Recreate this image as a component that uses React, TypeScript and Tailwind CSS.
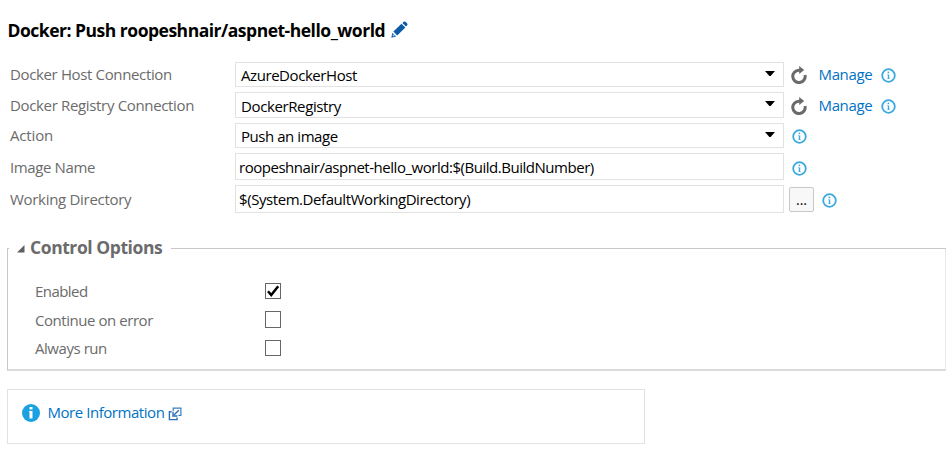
import type { ReactNode } from "react";

function InfoIcon({ className = "" }: { className?: string }) {
  return (
    <svg className={`block shrink-0 ${className}`} width="15" height="15" viewBox="0 0 15 15">
      <circle cx="7.5" cy="7.5" r="6.3" fill="none" stroke="#39a9e0" strokeWidth="1.8" />
      <rect x="6.6" y="3.6" width="1.6" height="1.6" fill="#39a9e0" />
      <path d="M6 6.4H8.2V10.4H8.8V11H6.2V10.4H6.8V7H6Z" fill="#39a9e0" />
    </svg>
  );
}

function RefreshIcon() {
  return (
    <svg className="block shrink-0" width="16" height="18" viewBox="0 0 16 18">
      <path d="M9.4 4.2H7.9A6.2 6.2 0 1 0 14 9" fill="none" stroke="#6a6a6a" strokeWidth="3" />
      <path d="M8.2 0L13.2 4L8.2 8Z" fill="#6a6a6a" />
    </svg>
  );
}

function PencilIcon() {
  return (
    <svg className="block shrink-0" width="17" height="17" viewBox="0 0 17 17">
      <path d="M11.4 2L12.7 0.8Q13.6 0 14.5 0.8L16.2 2.5Q17 3.4 16.2 4.2L15 5.5Z" fill="#0a5aa8" />
      <path d="M10.5 2.7L14.3 6.5L6.2 14.4L2.4 10.6Z" fill="#0a5aa8" />
      <path d="M1.4 11.7L5.1 15.4L0.3 16.7Z" fill="#0a5aa8" />
      <path d="M2.1 12.9L4 14.8L2.2 15.4L1.5 14.7Z" fill="#a9c8e4" />
    </svg>
  );
}

function Row({ label, labelClass, className, children }: { label: string; labelClass: string; className: string; children: ReactNode }) {
  return (
    <div className={`flex items-center ${className}`}>
      <div className={`w-[225px] shrink-0 text-[#6b6b6b] ${labelClass}`}>{label}</div>
      {children}
    </div>
  );
}

function Select({ value, textClass }: { value: string; textClass: string }) {
  return (
    <div className="flex h-full w-[549px] shrink-0 items-center justify-between border border-[#e2e2e2] pr-2 pl-[5px] text-black">
      <span className={textClass}>{value}</span>
      <svg className="mb-[3px] block" width="10" height="5" viewBox="0 0 10 5">
        <path d="M0 0H10L5.6 5H4.4Z" fill="#000" />
      </svg>
    </div>
  );
}

function TextField({ value, textClass }: { value: string; textClass: string }) {
  return (
    <div className="flex h-full w-[549px] shrink-0 items-center border border-[#e2e2e2] pl-[3px] text-black">
      <span className={textClass}>{value}</span>
    </div>
  );
}

function ManageLinks({ linkClass = "", iconClass = "" }: { linkClass?: string; iconClass?: string }) {
  return (
    <div className="flex items-center pl-[7px]">
      <span className={iconClass}>
        <RefreshIcon />
      </span>
      <a className={`ml-[11.5px] w-[62.5px] tracking-[-0.36px] text-[#0072c6] ${linkClass}`}>Manage</a>
      <InfoIcon className="mt-[2px]" />
    </div>
  );
}

function Check({ label, labelClass, checked, className, boxClass = "h-4" }: { label: string; labelClass: string; checked?: boolean; className: string; boxClass?: string }) {
  return (
    <div className={`flex items-center ${className}`}>
      <span className={`w-[230px] shrink-0 text-[#6b6b6b] ${labelClass}`}>{label}</span>
      <span className={`flex w-4 items-center justify-center border border-[#666] ${boxClass}`}>
        {checked && (
          <svg className="block shrink-0" width="14" height="14" viewBox="0 0 14 14">
            <path d="M2 7.3L5.2 11L12.2 2.2" fill="none" stroke="#000" strokeWidth="2.5" />
          </svg>
        )}
      </span>
    </div>
  );
}

export default function App() {
  return (
    <div className="h-[459px] w-[946px] overflow-hidden bg-white pt-[20px] font-['Open_Sans','Noto_Sans',sans-serif] text-[15px] leading-[20px] whitespace-nowrap">
      <div className="flex h-[22px] items-center pl-[7.5px]">
        <h1 className="w-[383.5px] pb-[2px] text-[17.5px] font-bold tracking-[-0.49px] text-black">Docker: Push roopeshnair/aspnet-hello_world</h1>
        <span className="-mt-[3px]">
          <PencilIcon />
        </span>
      </div>

      <div className="pt-5 pl-[10px]">
        <Row label="Docker Host Connection" labelClass="tracking-[-0.36px] pb-[2px]" className="h-[25px]">
          <Select value="AzureDockerHost" textClass="tracking-[-0.43px]" />
          <ManageLinks linkClass="pb-[2px]" iconClass="mt-px" />
        </Row>
        <Row label="Docker Registry Connection" labelClass="tracking-[-0.34px]" className="mt-[5px] h-[26px]">
          <Select value="DockerRegistry" textClass="tracking-[-0.38px] pt-[2px]" />
          <ManageLinks iconClass="mt-[2px]" />
        </Row>
        <Row label="Action" labelClass="tracking-[-0.15px] pb-[2px]" className="mt-[5px] h-[25px]">
          <Select value="Push an image" textClass="tracking-[-0.45px]" />
          <InfoIcon className="mt-[2px] ml-2" />
        </Row>
        <Row label="Image Name" labelClass="tracking-[-0.38px]" className="mt-[5px] h-[27px]">
          <TextField value="roopeshnair/aspnet-hello_world:$(Build.BuildNumber)" textClass="tracking-[-0.47px]" />
          <InfoIcon className="mt-[4px] ml-2" />
        </Row>
        <Row label="Working Directory" labelClass="tracking-[-0.3px]" className="mt-[5px] h-[28px]">
          <TextField value="$(System.DefaultWorkingDirectory)" textClass="tracking-[-0.43px]" />
          <button className="mt-px ml-[5px] h-[25px] w-[25px] rounded-[2px] border border-[#c8c8c8] bg-[#f8f8f8] text-[14px] leading-[22px] text-black">...</button>
          <InfoIcon className="mt-[2px] ml-2" />
        </Row>
      </div>

      <section className="mt-[25px] ml-[7px] h-[133px] w-[939px]">
        <div className="flex h-[20px] items-center">
          <span className="mt-[1px] h-px w-[2px] bg-[#c8c8c8]" />
          <svg className="mt-[2px] ml-[8px] block" width="8" height="8" viewBox="0 0 8 8">
            <path d="M7.5 0V7.5H0Z" fill="#5f5f5f" />
          </svg>
          <h2 className="-mt-[3px] ml-[5px] w-[141px] text-[17.5px] font-bold tracking-[-0.43px] text-[#6b6b6b]">Control Options</h2>
          <span className="mt-[1px] h-px flex-1 bg-[#c8c8c8]" />
        </div>
        <div className="-mt-[10px] h-[123px] border-r border-b-2 border-l border-r-[#e8e8e8] border-b-[#dadada] border-l-[#c8c8c8] pt-[35px] pl-[27px]">
          <Check label="Enabled" labelClass="tracking-[-0.55px]" checked className="h-4" />
          <Check label="Continue on error" labelClass="tracking-[-0.45px]" className="mt-[12px] h-[17px]" boxClass="h-[17px]" />
          <Check label="Always run" labelClass="tracking-[-0.45px]" className="mt-[12px] h-4" />
        </div>
      </section>

      <div className="mt-[18px] ml-[7px] flex h-[55px] w-[638px] items-start border border-[#e2e2e2] pt-[12px] pl-[14px]">
        <svg className="mt-[2px] block" width="18" height="18" viewBox="0 0 18 18">
          <circle cx="9" cy="9" r="9" fill="#1ba1e2" />
          <rect x="7.5" y="3" width="3" height="2.5" fill="#fff" />
          <path d="M7 7H10.5V14.5H7.5V8H7Z" fill="#fff" />
        </svg>
        <a className="ml-[7.5px] w-[120.5px] tracking-[-0.45px] text-[#0072c6]">More Information</a>
        <svg className="mt-[5px] block" width="14" height="14" viewBox="0 0 14 14">
          <path d="M5.2 4V1.2H12.9V8.4H10.4" fill="none" stroke="#3b7fc0" strokeWidth="1.2" />
          <path d="M3.6 4.8H1.4V12.6H9V10.4" fill="none" stroke="#2a70b8" strokeWidth="1.4" />
          <path d="M10.8 3.2L6.2 7.8M5 4.8V9H9.4" fill="none" stroke="#2a70b8" strokeWidth="1.4" />
        </svg>
      </div>
    </div>
  );
}
